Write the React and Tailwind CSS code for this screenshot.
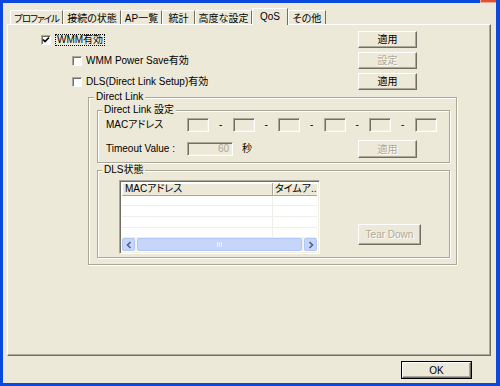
import React from "react";

const BEVEL_UP =
  "border border-t-white border-l-white border-r-[#716F64] border-b-[#716F64] shadow-[inset_-1px_-1px_0_#ACA899]";
const SUNKEN =
  "border border-t-[#ACA899] border-l-[#ACA899] border-r-white border-b-white shadow-[inset_1px_1px_0_#716F64,inset_-1px_-1px_0_#F1EFE2]";

function Btn({ children, disabled, size = "w-[59px] h-[17px]" }) {
  return (
    <div
      className={`${size} shrink-0 flex items-center justify-center bg-[#ECE9D8] ${BEVEL_UP} ${
        disabled ? "text-[#ACA899] [text-shadow:1px_1px_0_#fff]" : "text-black"
      }`}
    >
      {children}
    </div>
  );
}

function Check({ checked }) {
  return (
    <div className="w-[10px] h-[10px] shrink-0 bg-white border border-t-[#ACA899] border-l-[#ACA899] border-r-white border-b-white shadow-[inset_1px_1px_0_#716F64] flex items-center justify-center">
      {checked && (
        <svg width="8" height="8" viewBox="0 0 8 8">
          <polyline points="1,3.5 3,5.5 7,1.5" fill="none" stroke="#000" strokeWidth="1.6" />
        </svg>
      )}
    </div>
  );
}

function Group({ label, className, children, legendClass = "ml-[5px]" }) {
  return (
    <fieldset
      className={`border border-[#ACA899] shadow-[inset_1px_1px_0_#fff,1px_1px_0_#fff] ${className}`}
    >
      <legend className={`${legendClass} px-[2px] bg-[#ECE9D8] leading-[12px] whitespace-nowrap`}>
        {label}
      </legend>
      {children}
    </fieldset>
  );
}

function Tab({ label, w, selected, textClass = "" }) {
  if (selected) {
    return (
      <div
        className={`${w} h-[17px] -mb-px relative z-10 bg-[#ECE9D8] border-t border-l border-r border-t-white border-l-white border-r-[#716F64] flex items-start justify-center pt-[2px] leading-[12px] whitespace-nowrap`}
      >
        {label}
      </div>
    );
  }
  return (
    <div
      className={`${w} h-[14px] border-t border-l border-r border-t-white border-l-white border-r-[#716F64] flex items-start justify-center pt-[2px] leading-[12px] whitespace-nowrap overflow-hidden`}
    >
      <span className={textClass}>{label}</span>
    </div>
  );
}

function MacBox() {
  return <div className={`w-[22px] h-[14px] shrink-0 bg-[#ECE9D8] ${SUNKEN}`} />;
}

function Dash() {
  return <div className="w-[23.5px] shrink-0 text-center leading-[12px]">-</div>;
}

function Chevron({ dir }) {
  return (
    <svg width="6" height="8" viewBox="0 0 6 8">
      <polyline
        points={dir === "left" ? "4.5,1 1.5,4 4.5,7" : "1.5,1 4.5,4 1.5,7"}
        fill="none"
        stroke="#4D6185"
        strokeWidth="1.6"
      />
    </svg>
  );
}

export default function App() {
  return (
    <div className="relative w-[500px] h-[386px] bg-[#0A48DE] pt-[3px] pl-[3px] pr-[4px] pb-[3px] [font-family:'Liberation_Sans','Noto_Sans_CJK_JP',sans-serif] [font-feature-settings:'palt'] text-[10px] text-black">
      <div className="absolute left-[480px] top-0 w-[16px] h-[3px] bg-[#E0502D] border-l border-b border-[#F2A897]" />
      <div className="w-full h-full bg-[#ECE9D8] flex flex-col">
        {/* tab strip */}
        <div className="mt-[5px] h-[16px] pl-[7px] flex items-end">
          <Tab label="プロファイル" w="w-[53px]" textClass="text-[9.5px] tracking-[-1px]" />
          <Tab label="接続の状態" w="w-[58px]" />
          <Tab label="AP一覧" w="w-[41px]" />
          <Tab label="統計" w="w-[33px]" />
          <Tab label="高度な設定" w="w-[57px]" />
          <Tab label="QoS" w="w-[36px]" selected />
          <Tab label="その他" w="w-[38px]" />
        </div>

        {/* panel */}
        <div className="ml-[4px] w-[484px] h-[332px] border border-t-white border-l-white border-r-[#716F64] border-b-[#716F64] shadow-[inset_-1px_-1px_0_#ACA899] flex flex-col">
          <div className="mt-[6px] flex flex-col gap-[4px]">
            <div className="h-[17px] flex items-center">
              <div className="w-[350px] flex items-center pl-[33px]">
                <Check checked />
                <span className="ml-[4px] px-px border border-dotted border-black leading-[10px]">
                  WMM有効
                </span>
              </div>
              <Btn>適用</Btn>
            </div>
            <div className="h-[17px] flex items-center">
              <div className="w-[350px] flex items-center pl-[64px]">
                <Check />
                <span className="ml-[4px] leading-[12px]">WMM Power Save有効</span>
              </div>
              <Btn disabled>設定</Btn>
            </div>
            <div className="h-[17px] flex items-center">
              <div className="w-[350px] flex items-center pl-[64px]">
                <Check />
                <span className="ml-[4px] leading-[12px]">DLS(Direct Link Setup)有効</span>
              </div>
              <Btn>適用</Btn>
            </div>
          </div>

          {/* Direct Link group */}
          <Group label="Direct Link" legendClass="ml-[5px]" className="ml-[80px] mt-px w-[369px]">
            <div className="pl-[8px] pr-[6px] pb-[6px]">
              <Group label="Direct Link 設定" legendClass="ml-[4px]" className="mt-px pb-[4px]">
                <div className="mt-[2px] pl-[8px] flex items-center h-[14px]">
                  <div className="w-[81px] leading-[12px]">MACアドレス</div>
                  <MacBox />
                  <Dash />
                  <MacBox />
                  <Dash />
                  <MacBox />
                  <Dash />
                  <MacBox />
                  <Dash />
                  <MacBox />
                  <Dash />
                  <MacBox />
                </div>
                <div className="mt-[8px] pl-[8px] pr-[32px] flex items-center h-[18px]">
                  <div className="w-[81px] leading-[12px]">Timeout Value :</div>
                  <div
                    className={`w-[46px] h-[14px] bg-[#ECE9D8] ${SUNKEN} flex items-center justify-end pr-[3px] text-[#ACA899] leading-[10px]`}
                  >
                    60
                  </div>
                  <div className="ml-[9px] leading-[12px]">秒</div>
                  <div className="ml-auto">
                    <Btn disabled size="w-[59px] h-[18px]">
                      適用
                    </Btn>
                  </div>
                </div>
              </Group>

              <Group label="DLS状態" legendClass="ml-[4px]" className="mt-px pb-[3px]">
                <div className="mt-[4px] pl-[21px] flex items-end">
                  <div className={`w-[201px] h-[74px] bg-white ${SUNKEN} p-[2px] flex flex-col`}>
                    <div className="h-[13px] flex bg-[#ECE9D8] leading-[11px]">
                      <div className="w-[151px] pl-[3px] border-r border-b border-r-[#ACA899] border-b-[#ACA899] shadow-[inset_1px_1px_0_#fff]">
                        MACアドレス
                      </div>
                      <div className="flex-1 min-w-0 pl-[2px] border-b border-b-[#ACA899] shadow-[inset_1px_1px_0_#fff] whitespace-nowrap">
                        タイムア..
                      </div>
                    </div>
                    {[0, 1, 2, 3].map((i) => (
                      <div key={i} className="h-[11px] flex border-b border-[#EFEEE8]">
                        <div className="w-[151px] border-r border-[#EFEEE8]" />
                        <div className="flex-1" />
                      </div>
                    ))}
                    <div className="h-[13px] flex items-stretch bg-[#F4F3EE] gap-[2px]">
                      <div className="w-[13px] rounded-[2px] bg-[#C5D5FC] border border-[#B2C6F3] flex items-center justify-center">
                        <Chevron dir="left" />
                      </div>
                      <div className="flex-1 rounded-[2px] bg-[#C5D5FC] border border-[#B2C6F3] flex items-center justify-center gap-[1px]">
                        <div className="w-px h-[5px] bg-[#EEF3FE]" />
                        <div className="w-px h-[5px] bg-[#EEF3FE]" />
                        <div className="w-px h-[5px] bg-[#EEF3FE]" />
                      </div>
                      <div className="w-[13px] rounded-[2px] bg-[#C5D5FC] border border-[#B2C6F3] flex items-center justify-center">
                        <Chevron dir="right" />
                      </div>
                    </div>
                  </div>
                  <div className="ml-[38px] mb-[9px]">
                    <Btn disabled size="w-[63px] h-[21px]">
                      Tear Down
                    </Btn>
                  </div>
                </div>
              </Group>
            </div>
          </Group>
        </div>

        {/* OK */}
        <div className="mt-[5px] flex justify-end pr-[24px]">
          <div className="w-[71px] h-[18px] border border-black flex">
            <div className={`flex-1 flex items-center justify-center bg-[#ECE9D8] ${BEVEL_UP}`}>OK</div>
          </div>
        </div>
      </div>
    </div>
  );
}
